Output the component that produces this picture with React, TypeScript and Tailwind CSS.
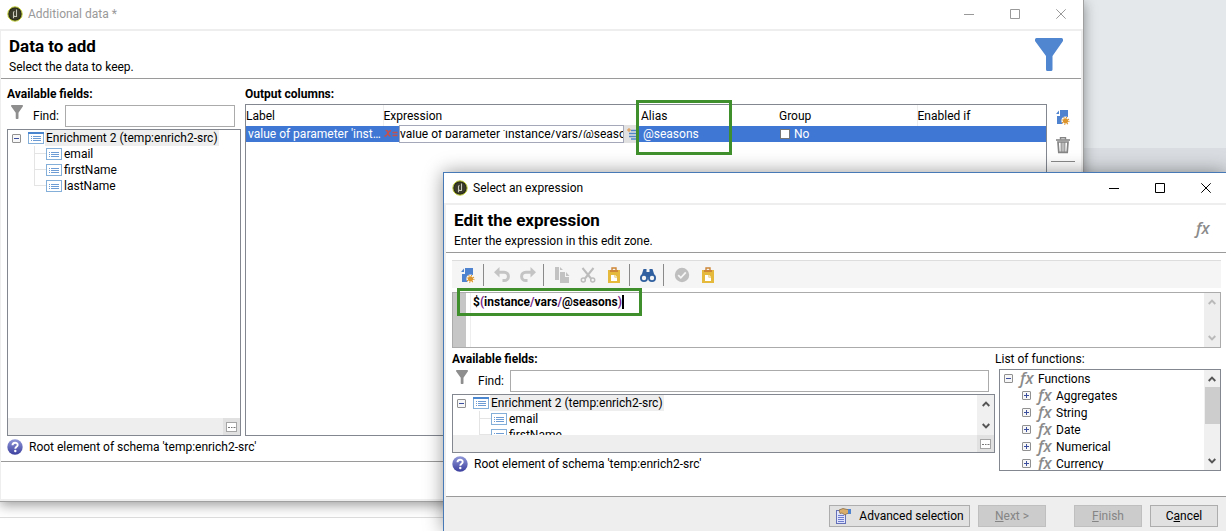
import type { ReactNode } from "react";

const GREEN_BOX = "absolute border-[3px] border-[#3f8f2c] pointer-events-none";

const AppLogo = () => (
  <svg className="w-4 h-4 shrink-0" viewBox="0 0 16 16">
    <circle cx="8" cy="8" r="7.2" fill="#2c2c1c" stroke="#c5d23c" strokeWidth="1" />
    <circle cx="8" cy="8" r="5.6" fill="#3a3b2a" />
    <path d="M6.500 12.200V6.500q0-1 1-1M9.500 3.500v7q-3 .3-3-1.500" fill="none" stroke="#c9c9bb" strokeWidth="1.100" />
  </svg>
);

const Funnel = ({ className }: { className: string }) => (
  <svg className={className} viewBox="0 0 28 33" fill="currentColor">
    <path d="M1.500 0h25q1.500 0 1.500 1.500v1.500L17.500 18v13.500q0 1.500-1.500 1.500h-3.500q-1.500 0-1.500-1.500V18L0 3V1.500Q0 0 1.500 0z" />
  </svg>
);

const NodeIcon = ({ root = false }: { root?: boolean }) => (
  <svg className="w-4 h-3 shrink-0" viewBox="0 0 16 12">
    <rect x="0.500" y="0.500" width="15" height="11" fill="#fff" stroke="#84afd8" />
    {root && <rect width="16" height="2" fill="#4a86d0" />}
    <path d="M3 4.500h1M3 6.500h1M3 8.500h1M5 4.500h8M5 6.500h8M5 8.500h8" stroke="#6d9bd3" />
  </svg>
);

const Expander = ({ open = false }: { open?: boolean }) => (
  <svg className="w-[9px] h-[9px] shrink-0" viewBox="0 0 9 9">
    <rect x="0.500" y="0.500" width="8" height="8" rx="0.500" fill="#f7f7f7" stroke="#919191" />
    <path d={open ? "M2 4.500h5" : "M2 4.500h5M4.500 2v5"} stroke="#3c4f9e" />
  </svg>
);

const NewDocIcon = () => (
  <svg className="w-4 h-4" viewBox="0 0 16 16">
    <path d="M5 1h8v7.500H8.500V15H2V7h3z" fill="#4f83cf" />
    <path d="M1 5l3-3.500V5z" fill="#4f83cf" />
    <circle cx="10.500" cy="11.800" r="4.200" fill="#fff" />
    <circle cx="10.500" cy="11.800" r="2.600" fill="#dc942c" />
    <circle cx="10.500" cy="11.800" r="3.400" fill="none" stroke="#dc942c" strokeWidth="1.200" strokeDasharray="1.200 1.470" />
  </svg>
);

const TrashIcon = () => (
  <svg className="w-4 h-[18px]" viewBox="0 0 16 18" fill="none" stroke="#858585">
    <path d="M1 4h14" strokeWidth="1.600" />
    <path d="M5.500 3.500V1.700h5v1.800" strokeWidth="1.400" />
    <path d="M3 6h10l-.8 10.300H3.800z" strokeWidth="1.700" />
    <path d="M6.200 6v10M8 6v10M9.800 6v10" strokeWidth="1.100" />
  </svg>
);

const UndoIcon = () => (
  <svg className="w-4 h-4" viewBox="0 0 16 16">
    <path d="M5.500 0v10.500L0 5.200z" fill="#c4c4c4" />
    <path d="M4 5.200h6.200a4.200 4.200 0 0 1 0 8.400H8.500" fill="none" stroke="#c4c4c4" strokeWidth="3" />
  </svg>
);

const CopyIcon = () => (
  <svg className="w-4 h-4" viewBox="0 0 16 16" fill="#c2c2c2">
    <path d="M1 0h4v13H1zM6 0l3 3H6z" />
    <path d="M6 5h5v5h4v6H6zM12 5l3.500 4H12z" />
  </svg>
);

const CutIcon = () => (
  <svg className="w-4 h-4" viewBox="0 0 16 16" fill="none" stroke="#bcbcbc">
    <path d="M2.500 1L11 11.500M13.500 1L5 11.500" strokeWidth="2" />
    <circle cx="3.300" cy="13" r="2" strokeWidth="1.500" />
    <circle cx="12.700" cy="13" r="2" strokeWidth="1.500" />
  </svg>
);

const PasteIcon = () => (
  <svg className="w-4 h-4" viewBox="0 0 16 16">
    <rect x="2" y="3" width="12" height="13" fill="#e5b93b" />
    <path d="M4 3h8v2H4z" fill="#cd8536" />
    <path d="M6 3V1h4v2" fill="none" stroke="#cd8536" strokeWidth="1.400" />
    <path d="M5 8h3.500v2.500H11V14H5zM9.200 8L11 9.800H9.200z" fill="#fff" />
  </svg>
);

const BinocularsIcon = () => (
  <svg className="w-4 h-4" viewBox="0 0 16 16" fill="#30609f">
    <path d="M3.500 2h3v3h3V2h3l2.500 8H1z" />
    <circle cx="4" cy="11" r="4" />
    <circle cx="12" cy="11" r="4" />
    <circle cx="4" cy="11" r="2.200" fill="#f5f5f5" />
    <circle cx="12" cy="11" r="2.200" fill="#f5f5f5" />
  </svg>
);

const CheckIcon = () => (
  <svg className="w-4 h-4" viewBox="0 0 16 16">
    <circle cx="8" cy="8" r="7.200" fill="#bfbfbf" />
    <path d="M4.200 8.200l2.600 2.600 5-5.500" fill="none" stroke="#f5f5f5" strokeWidth="1.800" />
  </svg>
);

const HelpIcon = () => (
  <svg className="w-4 h-4 shrink-0" viewBox="0 0 16 16">
    <defs>
      <linearGradient id="help" x1="0" y1="0" x2="0" y2="1">
        <stop offset="0" stopColor="#9097d8" />
        <stop offset="1" stopColor="#3c409e" />
      </linearGradient>
    </defs>
    <circle cx="8" cy="8" r="7.700" fill="url(#help)" />
    <path d="M5.500 6.200c0-3.200 5.200-3.200 5.200-.2 0 1.800-2.400 1.700-2.400 3.700" fill="none" stroke="#fff" strokeWidth="1.900" />
    <circle cx="8.300" cy="12" r="1.200" fill="#fff" />
  </svg>
);

const WizardIcon = () => (
  <svg className="w-4 h-4" viewBox="0 0 16 16">
    <rect x="1.500" y="2.500" width="9" height="13" fill="#dfe3fb" stroke="#6470b8" />
    <path d="M3 7.500h6M3 9.500h6M3 11.500h6M3 13.500h6" stroke="#6d7ccc" />
    <path d="M4 2l4-1.500 4 1h3v4h-3l-2 1.500-3-2-2 .5z" fill="#d8ad6b" stroke="#7b603b" strokeWidth="0.700" />
    <rect x="13" y="1" width="3" height="5" fill="#4f83cf" />
  </svg>
);

const Chevron = ({ down = false, light = false }: { down?: boolean; light?: boolean }) => (
  <svg className={`w-2 h-[6px] ${light ? "text-[#b9b9b9]" : "text-[#555]"}`} viewBox="0 0 8 6">
    <path d={down ? "M.7 1L4 4.300 7.300 1" : "M.7 5L4 1.700 7.300 5"} fill="none" stroke="currentColor" strokeWidth="1.900" />
  </svg>
);

const Fx = () => (
  <span aria-hidden="true" className="h-4 w-[18px] font-['Open_Sans',sans-serif] text-base font-semibold italic leading-[14px] text-[#8b8b8b]">fx</span>
);

const WindowButtons = () => (
  <div className="flex">
    {[
      { name: "Minimize", d: "M0 5.500h10" },
      { name: "Maximize", d: "M.5.500h9v9h-9z" },
      { name: "Close", d: "M.3.300l9.400 9.400M9.700.300L.3 9.700" },
    ].map((item) => (
      <button key={item.name} aria-label={item.name} className="w-[46px] flex items-center justify-center">
        <svg className="w-[10px] h-[10px]" viewBox="0 0 10 10" fill="none" stroke="currentColor">
          <path d={item.d} />
        </svg>
      </button>
    ))}
  </div>
);

const WindowHeader = ({ title, text, icon }: { title: string; text: string; icon: ReactNode }) => (
  <header className="flex h-12 items-center justify-between border-b border-[#9a9a9a] pl-2 pr-[18px]">
    <div className="pt-[3px]">
      <h1 className="text-[17px] font-bold leading-[22px]">{title}</h1>
      <p className="leading-5">{text}</p>
    </div>
    {icon}
  </header>
);

const FindRow = ({ id }: { id: string }) => (
  <div className="flex h-[23px] items-center">
    <Funnel className="w-3 h-[14px] ml-1 mb-2 text-[#8e8e8e]" />
    <label htmlFor={id} className="ml-[10px] w-8">Find:</label>
    <input id={id} className="h-[22px] min-w-0 flex-1 border border-[#ababab] bg-white px-1 outline-none" />
  </div>
);

const FieldTree = ({ fields }: { fields: string[] }) => (
  <ul>
    <li className="flex h-4 items-center pl-1">
      <Expander open />
      <span className="ml-[7px]"><NodeIcon root /></span>
      <span className="ml-px bg-[#eee] px-px leading-4">Enrichment 2 (temp:enrich2-src)</span>
    </li>
    <li>
      <ul className="ml-[26px]">
        {fields.map((field) => (
          <li key={field} className="group relative flex h-4 items-center">
            <span className="absolute left-0 top-0 h-2 w-3 border-b border-l border-[#e4e4e4]" />
            <span className="absolute left-0 top-0 h-4 border-l border-[#e4e4e4] group-last:hidden" />
            <span className="ml-3 mr-[2px]"><NodeIcon /></span>
            {field}
          </li>
        ))}
      </ul>
    </li>
  </ul>
);

const MoreBar = () => (
  <div className="flex h-[17px] shrink-0 justify-end bg-[#eee]">
    <button aria-label="More" className="flex w-[17px] items-center justify-center bg-[#e1e1e1]">
      <svg className="w-[11px] h-[10px]" viewBox="0 0 11 10">
        <rect x="0.500" y="0.500" width="10" height="9" fill="#fff" stroke="#a5a5a5" />
        <path d="M2 5.500h2M5 5.500h1.500M7.500 5.500h2" stroke="#777" />
      </svg>
    </button>
  </div>
);

const HelpRow = () => (
  <div className="flex h-[21px] items-center gap-[6px] whitespace-nowrap">
    <HelpIcon />
    Root element of schema 'temp:enrich2-src'
  </div>
);

const DataWindow = () => (
  <section className="absolute left-0 right-[142px] top-0 flex h-[502px] flex-col border-b border-r border-[#a0a0a0] bg-white shadow-[0_3px_12px_rgba(0,0,0,0.4)]">
    <div className="flex h-[29px] shrink-0 justify-between text-[#999]">
      <div className="flex items-center gap-[5px] pb-[2px] pl-[7px]">
        <AppLogo />
        Additional data *
      </div>
      <div className="-mr-px flex pb-[2px]"><WindowButtons /></div>
    </div>
    <div className="flex flex-1 flex-col border-2 border-l border-[#eee]">
      <WindowHeader title="Data to add" text="Select the data to keep." icon={<Funnel className="w-7 h-[33px] text-[#5086d0]" />} />
      <div className="flex flex-1 gap-1 pl-[6px] pt-[6px]">
        <div className="flex w-[234px] flex-col">
          <h2 className="h-[19px] font-bold leading-[18px]">Available fields:</h2>
          <div className="pr-[6px]"><FindRow id="find-data" /></div>
          <div className="mt-[2px] flex h-[307px] flex-col border border-[#828790]">
            <div className="flex-1"><FieldTree fields={["email", "firstName", "lastName"]} /></div>
            <MoreBar />
          </div>
          <HelpRow />
        </div>
        <div className="min-w-0 flex-1">
          <h2 className="h-[19px] font-bold leading-[18px]">Output columns:</h2>
          <div className="h-[332px] border border-[#828790]">
            <table className="w-full table-fixed border-collapse text-left">
              <thead>
                <tr className="h-[21px]">
                  <th className="w-[137px] p-0 font-normal">Label</th>
                  <th className="w-[258px] border-l border-[#eee] p-0 font-normal">Expression</th>
                  <th className="relative w-[138px] p-0 font-normal">
                    Alias
                    <span className={`${GREEN_BOX} -left-[5px] -top-[5px] z-10 h-[55px] w-24`} />
                  </th>
                  <th className="w-[138px] p-0 font-normal">Group</th>
                  <th className="border-l border-[#eee] p-0 font-normal">Enabled if</th>
                </tr>
              </thead>
              <tbody>
                <tr className="h-4 bg-[#3f78d4] leading-4 text-white">
                  <td className="truncate p-0 pl-[2px]">value of parameter 'instance/vars/@seasons'</td>
                  <td className="relative p-0">
                    <div className="absolute inset-x-0 -top-px flex h-[18px] pr-[3px]">
                      <svg className="w-4 h-4" viewBox="0 0 16 16" fill="none" stroke="#c8504a" strokeWidth="1.500">
                        <path d="M2.500 5.500q2-.5 2.500 2.500t2.500 3M8 5.500q-1.500 0-3 2.700T1.500 11.500M9.500 7.500h5M9.500 10.500h5" />
                      </svg>
                      <div className="flex min-w-0 flex-1 items-center border border-[#a4a8b8] bg-white">
                        <input
                          aria-label="Expression"
                          className="h-2 w-full min-w-0 leading-4 text-black outline-none"
                          defaultValue="value of parameter 'instance/vars/@seasons'"
                        />
                      </div>
                      <button aria-label="Edit expression" className="w-[14px] bg-[#e1e1e1] pl-[3px]">
                        <svg className="w-[11px] h-3" viewBox="0 0 11 12">
                          <path d="M4 2.500h7M2 5.500h9M2 8.500h9M4 11h7" stroke="#4f86c8" strokeWidth="1.300" />
                          <path d="M2 0v4M0 2h4" stroke="#dd9145" />
                        </svg>
                      </button>
                    </div>
                  </td>
                  <td className="p-0 pl-[2px]">@seasons</td>
                  <td className="p-0">
                    <label className="flex items-center gap-1 pl-px">
                      <input type="checkbox" className="h-[10px] w-[10px] appearance-none border border-[#777] bg-white" />
                      No
                    </label>
                  </td>
                  <td className="p-0" />
                </tr>
              </tbody>
            </table>
          </div>
        </div>
        <div className="flex w-[30px] flex-col items-center pr-[6px] pt-6">
          <button aria-label="Add"><NewDocIcon /></button>
          <button aria-label="Delete" className="mt-[11px]"><TrashIcon /></button>
          <div className="mt-[7px] w-6 border-t border-[#8a8a8a]" />
        </div>
      </div>
      <footer className="h-[38px] border-t border-[#9a9a9a]" />
    </div>
  </section>
);

const functionGroups = ["Aggregates", "String", "Date", "Numerical", "Currency"];

const tools = [
  [{ name: "New", icon: <NewDocIcon /> }],
  [
    { name: "Undo", icon: <UndoIcon /> },
    { name: "Redo", icon: <span className="block -scale-x-100"><UndoIcon /></span> },
  ],
  [
    { name: "Copy", icon: <CopyIcon /> },
    { name: "Cut", icon: <CutIcon /> },
    { name: "Paste", icon: <PasteIcon /> },
  ],
  [{ name: "Search", icon: <BinocularsIcon /> }],
  [
    { name: "Validate", icon: <CheckIcon /> },
    { name: "Insert", icon: <PasteIcon /> },
  ],
];

const ExpressionWindow = () => (
  <section className="absolute left-[443px] right-0 top-[172px] border-l border-t border-[#4679b5] bg-white shadow-[0_0_18px_rgba(0,0,0,0.4)]">
    <div className="flex h-[30px] justify-between">
      <div className="flex items-center gap-[5px] pl-2">
        <AppLogo />
        Select an expression
      </div>
      <div className="-mr-[3px] flex"><WindowButtons /></div>
    </div>
    <div className="border-l-2 border-t-2 border-[#eee]">
      <WindowHeader
        title="Edit the expression"
        text="Enter the expression in this edit zone."
        icon={<div className="-mr-[6px] flex"><Fx /></div>}
      />
      <div className="pl-[6px] pr-[5px] pt-[7px]">
        <div className="flex h-7 items-center border-t border-[#ddd] bg-[#f5f5f5]">
          {tools.map((group, index) => (
            <div key={index} className={`flex h-[22px] items-center gap-[10px] pr-[7px] ${index > 0 ? "border-l border-[#8a8a8a] pl-[10px]" : "pl-2"}`}>
              {group.map((tool) => (
                <button key={tool.name} aria-label={tool.name}>{tool.icon}</button>
              ))}
            </div>
          ))}
        </div>
        <div className="relative mt-1 flex h-14 border border-[#ababab]">
          <div className="w-[13px] bg-[#c6c6c6]" />
          <div className="ml-1 border-l border-[#eee]" />
          <div
            contentEditable
            suppressContentEditableWarning
            role="textbox"
            aria-label="Expression"
            className="flex-1 pl-[2px] font-bold leading-[18px] outline-none"
          >
            $<span className="text-[#7a1f8c]">(</span>instance<span className="text-[#7a1f8c]">/</span>vars
            <span className="text-[#7a1f8c]">/</span>@seasons<span className="border-r-2 border-black text-[#7a1f8c]">)</span>
          </div>
          <div className="flex w-4 flex-col items-center justify-between bg-[#eee] py-[6px]">
            <Chevron light />
            <Chevron down light />
          </div>
          <span className={`${GREEN_BOX} -top-[5px] left-1 h-7 w-[185px]`} />
        </div>
        <div className="flex gap-1 pt-[2px]">
          <div className="min-w-0 flex-1">
            <h2 className="h-[19px] font-bold leading-[18px]">Available fields:</h2>
            <div className="pr-[6px]"><FindRow id="find-expression" /></div>
            <div className="mt-[2px] flex h-[59px] flex-col border border-[#828790]">
              <div className="flex h-10 overflow-hidden">
                <div className="flex-1"><FieldTree fields={["email", "firstName"]} /></div>
                <div className="flex w-[17px] flex-col items-center justify-between bg-[#f0f0f0] py-[6px]">
                  <Chevron />
                  <Chevron down />
                </div>
              </div>
              <MoreBar />
            </div>
            <HelpRow />
          </div>
          <div className="w-[222px]">
            <h2 className="-ml-1 h-[19px] leading-[18px]">List of functions:</h2>
            <div className="flex h-[102px] border border-[#828790]">
              <ul className="flex-1 overflow-hidden">
                <li className="flex h-[17px] items-center pl-1">
                  <Expander open />
                  <span className="ml-[7px] flex"><Fx /></span>
                  Functions
                </li>
                {functionGroups.map((name) => (
                  <li key={name} className="flex h-[17px] items-center pl-[22px]">
                    <Expander />
                    <span className="ml-[7px] flex"><Fx /></span>
                    {name}
                  </li>
                ))}
              </ul>
              <div className="flex w-4 flex-col items-center bg-[#f0f0f0] py-[6px]">
                <Chevron />
                <div className="mt-[5px] h-[37px] w-[15px] bg-[#cdcdcd]" />
                <div className="mt-auto flex"><Chevron down /></div>
              </div>
            </div>
          </div>
        </div>
      </div>
      <footer className="mt-[22px] flex h-[35px] items-start gap-2 border-t border-[#9a9a9a] bg-[#eee] pr-2 pt-2">
        <button className="ml-auto flex h-[22px] w-[141px] items-center justify-center gap-2 border border-[#adadad] bg-[#e1e1e1]">
          <WizardIcon />
          Advanced selection
        </button>
        <button disabled className="h-[22px] w-[68px] border border-[#bfbfbf] bg-[#ccc] text-[#858585]"><u>N</u>ext &gt;</button>
        <button disabled className="ml-5 h-[22px] w-[68px] border border-[#bfbfbf] bg-[#ccc] text-[#858585]"><u>F</u>inish</button>
        <button className="h-[22px] w-[68px] border border-[#adadad] bg-[#e1e1e1]">C<u>a</u>ncel</button>
      </footer>
    </div>
  </section>
);

const App = () => {
  return (
    <main className="relative flex min-h-screen flex-col overflow-hidden bg-white font-[Roboto,sans-serif] text-xs text-black">
      <div className="h-[148px] bg-[#e4e8eb]" />
      <div className="h-[300px] bg-[#d9dde1]" />
      <div className="h-[70px] border-b border-[#ddd]" />
      <DataWindow />
      <ExpressionWindow />
    </main>
  );
};

export default App;
